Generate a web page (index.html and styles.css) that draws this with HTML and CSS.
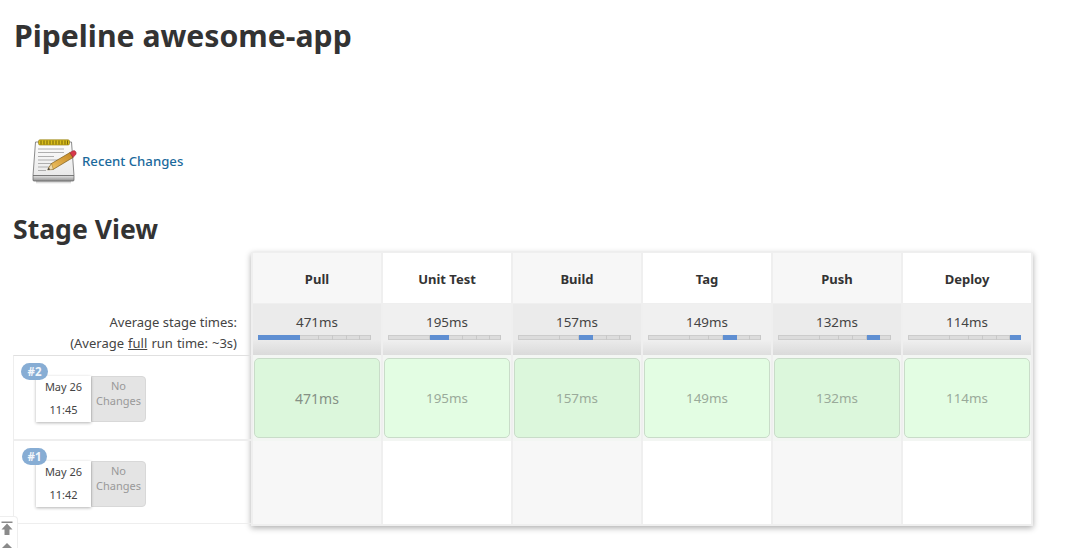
FILE: index.html
```html
<!DOCTYPE html>
<html lang="en">
<head>
<meta charset="utf-8">
<title>Pipeline awesome-app</title>
<link rel="stylesheet" href="styles.css">
</head>
<body>
<main class="main">
  <h1 class="title">Pipeline awesome-app</h1>
  <a class="recent" href="#">
    <svg class="note-icon" width="48" height="48" viewBox="0 0 48 48">
      <defs>
        <linearGradient id="pad" x1="0" y1="0" x2="0" y2="1"><stop offset="0" stop-color="#fdfdfd"/><stop offset="1" stop-color="#e9e9e9"/></linearGradient>
        <linearGradient id="base" x1="0" y1="0" x2="0" y2="1"><stop offset="0" stop-color="#e4e4e4"/><stop offset="1" stop-color="#8f8f8f"/></linearGradient>
        <linearGradient id="pencil" x1="0" y1="1" x2="1" y2="0"><stop offset="0" stop-color="#f2c668"/><stop offset="1" stop-color="#c48620"/></linearGradient>
        <linearGradient id="shade" x1="0" y1="0" x2="0" y2="1"><stop offset="0" stop-color="#bbb"/><stop offset="1" stop-color="#fff"/></linearGradient>
      </defs>
      <rect x="6" y="44" width="35" height="3" fill="url(#shade)"/>
      <path d="M5.500 5h36L44 38.500H3z" fill="url(#pad)" stroke="#6e6e6e" stroke-width=".8"/>
      <path d="M3 38.500h41v4.500a1 1 0 0 1-1 1H4a1 1 0 0 1-1-1z" fill="url(#base)" stroke="#5f5f5f" stroke-width=".7"/>
      <rect x="8.500" y="2.800" width="31" height="5.200" rx="1.500" fill="#d8bd1c" stroke="#8a7408" stroke-width=".6"/>
      <path d="M11 3.500v4M14 3.500v4M17 3.500v4M20 3.500v4M23 3.500v4M26 3.500v4M29 3.500v4M32 3.500v4M35 3.500v4M37.500 3.500v4" stroke="#6b5a08" stroke-width=".9"/>
      <path d="M8 12h26M8 15.500h26M8 19.500h16M8 23h26M8 26.500h18M8 30h12M8 33.500h8" stroke="#a6a6a6" stroke-width=".9"/>
      <path d="M18 32l3.500-5.500L40 15.500l3 5L23 32.500z" fill="url(#pencil)" stroke="#7a5a18" stroke-width=".7"/>
      <path d="M17.500 33l4-6.500 1.800 6z" fill="#f1dcb0" stroke="#7a5a18" stroke-width=".4"/>
      <path d="M17.500 33l1.300-2.200 1.300 1.700z" fill="#333"/>
      <path d="M40 15.500l2.600-1.500a2.400 2.400 0 0 1 3.200 3.400l-2.800 3.100z" fill="#d8384a" stroke="#8b2030" stroke-width=".5"/>
    </svg>
    <span class="recent-label">Recent Changes</span>
  </a>
  <h2 class="subtitle">Stage View</h2>

  <section class="stage-view">
    <div class="side">
      <div class="side-head"></div>
      <div class="side-avg">
        <div>Average stage times:</div>
        <div class="side-full">(Average <u>full</u> run time: ~3s)</div>
      </div>
      <div class="build">
        <span class="badge">#2</span>
        <div class="build-cards">
          <div class="date"><span>May 26</span><span>11:45</span></div>
          <div class="changes">No<br>Changes</div>
        </div>
      </div>
      <div class="build build-last">
        <span class="badge badge-one">#1</span>
        <div class="build-cards">
          <div class="date"><span>May 26</span><span>11:42</span></div>
          <div class="changes">No<br>Changes</div>
        </div>
      </div>
    </div>

    <div class="table">
      <div class="cell head odd">Pull</div>
      <div class="cell head">Unit Test</div>
      <div class="cell head odd">Build</div>
      <div class="cell head">Tag</div>
      <div class="cell head odd">Push</div>
      <div class="cell head">Deploy</div>

      <div class="cell avg odd">471ms<div class="bar"><i class="on s1"></i><i class="s2"></i><i class="s3"></i><i class="s4"></i><i class="s5"></i><i class="s6"></i></div></div>
      <div class="cell avg">195ms<div class="bar"><i class="s1"></i><i class="on s2"></i><i class="s3"></i><i class="s4"></i><i class="s5"></i><i class="s6"></i></div></div>
      <div class="cell avg odd">157ms<div class="bar"><i class="s1"></i><i class="s2"></i><i class="on s3"></i><i class="s4"></i><i class="s5"></i><i class="s6"></i></div></div>
      <div class="cell avg">149ms<div class="bar"><i class="s1"></i><i class="s2"></i><i class="s3"></i><i class="on s4"></i><i class="s5"></i><i class="s6"></i></div></div>
      <div class="cell avg odd">132ms<div class="bar"><i class="s1"></i><i class="s2"></i><i class="s3"></i><i class="s4"></i><i class="on s5"></i><i class="s6"></i></div></div>
      <div class="cell avg">114ms<div class="bar"><i class="s1"></i><i class="s2"></i><i class="s3"></i><i class="s4"></i><i class="s5"></i><i class="on s6"></i></div></div>

      <div class="cell run odd"><div class="ok big">471ms</div></div>
      <div class="cell run"><div class="ok">195ms</div></div>
      <div class="cell run odd"><div class="ok">157ms</div></div>
      <div class="cell run"><div class="ok">149ms</div></div>
      <div class="cell run odd"><div class="ok">132ms</div></div>
      <div class="cell run"><div class="ok">114ms</div></div>

      <div class="cell empty odd"></div>
      <div class="cell empty"></div>
      <div class="cell empty odd"></div>
      <div class="cell empty"></div>
      <div class="cell empty odd"></div>
      <div class="cell empty"></div>
    </div>
  </section>
</main>
<div class="scroller">
  <svg width="14" height="30" viewBox="0 0 14 30"><path d="M1.500 2.500h11v1.500h-11zM7 4.500l5.500 6H9.500V16h-5v-5.500H1.500z" fill="#8a8a8a"/><path d="M7 24l6 6H1z" fill="#8a8a8a"/></svg>
</div>
</body>
</html>
```
FILE: styles.css
```css
* { box-sizing: border-box; }
html, body { margin: 0; height: 100%; overflow: hidden; }
body {
  background: #fff;
  color: #333;
  font-family: "Noto Sans", "Open Sans", sans-serif;
  font-size: 13px;
}
.main { padding: 16px 0 0 13px; }
.title {
  margin: 0;
  padding-left: 1px;
  font-size: 30.2px;
  line-height: 40px;
  font-weight: 700;
}
.recent {
  display: flex;
  align-items: center;
  margin: 79px 0 0 17px;
  height: 52px;
  text-decoration: none;
  color: #1b6a9c;
  font-weight: 500;
}
.note-icon { flex: none; margin-right: 4px; }
.recent-label { font-size: 13.2px; }
.subtitle {
  margin: 24px 0 0;
  font-size: 26.6px;
  line-height: 36px;
  font-weight: 700;
}
.stage-view {
  display: flex;
  align-items: flex-start;
  margin-top: 5px;
}
.side { width: 238px; flex: none; }
.side-head { height: 52px; }
.side-avg {
  height: 51px;
  padding-right: 14px;
  text-align: right;
  font-size: 13px;
  line-height: 21px;
  padding-top: 8px;
  color: #444;
}
.side-full { word-spacing: .7px; }
.build {
  position: relative;
  height: 85px;
  border-top: 1px solid #e0e0e0;
  border-bottom: 1px solid #eee;
  border-left: 1px solid #eee;
  padding: 20px 0 0 22px;
}
.build-last { height: 84px; border-top-color: #eee; }
.badge {
  position: absolute;
  z-index: 1;
  left: 7px;
  top: 7px;
  width: 27px;
  height: 17px;
  border-radius: 9px;
  background: #87add4;
  color: #f2f6fb;
  font-size: 11.5px;
  font-weight: 700;
  line-height: 17px;
  text-align: center;
}
.badge-one { left: 8px; width: 25px; }
.build-cards { display: flex; }
.date {
  width: 55px;
  height: 46px;
  background: #fff;
  box-shadow: 0 1px 3px rgba(0,0,0,.3);
  display: flex;
  flex-direction: column;
  align-items: center;
  justify-content: space-between;
  padding: 3px 0 4px;
  font-size: 11px;
  line-height: 16px;
  color: #444;
  position: relative;
}
.changes {
  width: 55px;
  height: 46px;
  background: #e4e4e4;
  border: 1px solid #d8d8d8;
  border-radius: 0 4px 4px 0;
  color: #999;
  font-size: 11px;
  line-height: 15px;
  text-align: center;
  padding-top: 1px;
}
.table {
  display: grid;
  grid-template-columns: repeat(6, 130px);
  grid-template-rows: 51px 51px 86px 83px;
  width: 782px;
  height: 274px;
  flex: none;
  padding: 1px 0 0 2px;
  background: #efefef;
  box-shadow: 0 2px 6px rgba(0,0,0,.32);
}
.cell {
  border-right: 2px solid #efefef;
  background: #fff;
}
.cell.odd { background: #f7f7f7; }
.head {
  display: flex;
  align-items: center;
  justify-content: center;
  font-weight: 700;
  font-size: 13px;
  height: 50px;
  padding-top: 2px;
  color: #333;
}
.avg {
  background: linear-gradient(#f0f0f0 70%, #dedede) !important;
  text-align: center;
  font-size: 13.4px;
  line-height: 18px;
  padding: 9px 10px 0 5px;
  text-indent: 5px;
  color: #444;
}
.avg.odd { background: linear-gradient(#ebebeb 70%, #dadada) !important; }
.bar {
  display: flex;
  height: 5px;
  margin-top: 4px;
  background: #dcdcdc;
  box-shadow: inset 0 0 0 1px #ccc;
}
.bar i { display: block; height: 5px; border-right: 1px solid #c8c8c8; }
.bar .on { background: #5f8fd2; border-color: #5f8fd2; }
.bar .s1 { flex: 471 0 0; }
.bar .s2 { flex: 195 0 0; }
.bar .s3 { flex: 157 0 0; }
.bar .s4 { flex: 149 0 0; }
.bar .s5 { flex: 132 0 0; }
.bar .s6 { flex: 114 0 0; }
.run { padding: 3px 1px 0 1px; background: #f3f6f3 !important; }
.ok {
  height: 80px;
  border: 1px solid #c9dcc9;
  border-radius: 5px;
  background: #e3fde3;
  display: flex;
  align-items: center;
  justify-content: center;
  font-size: 13.4px;
  color: #9aaa9a;
}
.odd .ok { background: #dcf7dc; }
.ok.big { font-size: 14px; color: #859085; }
.scroller {
  position: absolute;
  left: 0;
  bottom: 0;
  width: 18px;
  height: 32px;
  border: 1px solid #eee;
  border-radius: 0 4px 0 0;
  border-left: 0;
  border-bottom: 0;
  background: #fff;
  padding: 2px 0 0 0;
  overflow: hidden;
}
.scroller svg { display: block; }
```
